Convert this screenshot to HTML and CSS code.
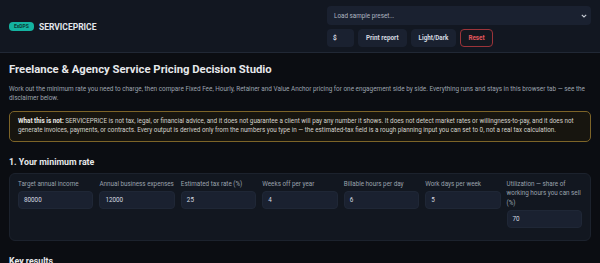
FILE: index.html
```html
<!DOCTYPE html>
<html lang="en">
<head>
    <meta charset="UTF-8">
    <meta name="viewport" content="width=device-width, initial-scale=1.0">
    <title>SERVICEPRICE</title>
    <link rel="stylesheet" href="styles.css">
</head>
<body>

    <!-- Top bar -->
    <header class="topbar">
        <div class="brand">
            <span class="badge">ExDPS</span>
            <span class="brand-name">SERVICEPRICE</span>
        </div>
        <div class="controls">
            <div class="preset">
                <span>Load sample preset...</span>
                <svg class="chevron" width="6" height="4" viewBox="0 0 6 4"><path d="M0.8 0.8 L3 3 L5.2 0.8" fill="none" stroke="#c7ccd4" stroke-width="1.1"/></svg>
            </div>
            <div class="control-row">
                <div class="currency">$</div>
                <button class="btn">Print report</button>
                <button class="btn">Light/Dark</button>
                <button class="btn btn-reset">Reset</button>
            </div>
        </div>
    </header>

    <main class="page">
        <h1>Freelance &amp; Agency Service Pricing Decision Studio</h1>
        <p class="intro">Work out the minimum rate you need to charge, then compare Fixed Fee, Hourly, Retainer and Value Anchor pricing for one engagement side by side. Everything runs and stays in this browser tab — see the disclaimer below.</p>

        <div class="notice">
            <strong>What this is not:</strong> SERVICEPRICE is not tax, legal, or financial advice, and it does not guarantee a client will pay any number it shows. It does not detect market rates or willingness-to-pay, and it does not generate invoices, payments, or contracts. Every output is derived only from the numbers you type in — the estimated-tax field is a rough planning input you can set to 0, not a real tax calculation.
        </div>

        <h2>1. Your minimum rate</h2>
        <div class="card">
            <label class="field">Target annual income<span class="input">80000</span></label>
            <label class="field">Annual business expenses<span class="input">12000</span></label>
            <label class="field">Estimated tax rate (%)<span class="input">25</span></label>
            <label class="field">Weeks off per year<span class="input">4</span></label>
            <label class="field">Billable hours per day<span class="input">6</span></label>
            <label class="field">Work days per week<span class="input">5</span></label>
            <label class="field"><span>Utilization — share of working hours you can sell<br>(%)</span><span class="input">70</span></label>
        </div>

        <h2>Key results</h2>
    </main>

</body>
</html>
```

FILE: styles.css
```css
/* General Page Styles */
body {
    font-family: Roboto, 'Liberation Sans', sans-serif;
    background: #0b0d12;
    color: #e4e7eb;
    margin: 0;
}

/* Top bar */
.topbar {
    display: flex;
    justify-content: space-between;
    align-items: center;
    background: #121721;
    border-bottom: 1px solid #212835;
    padding: 6px 9px 5px;
}

.brand {
    display: flex;
    align-items: center;
    gap: 5px;
}

.badge {
    background: #14b3a1;
    color: #0b3b35;
    font-size: 5px;
    font-weight: 700;
    padding: 2px 5px;
    border-radius: 4px;
    line-height: 5px;
}

.brand-name {
    font-size: 8.5px;
    font-weight: 700;
    color: #e3e6eb;
}

.controls {
    width: 264px;
    display: flex;
    flex-direction: column;
    gap: 4px;
}

.preset {
    height: 19px;
    background: #1a2130;
    border-radius: 4px;
    display: flex;
    align-items: center;
    justify-content: space-between;
    padding: 0 4px 0 7px;
    font-size: 6.3px;
    color: #aeb5c0;
}

.control-row {
    display: flex;
    gap: 4px;
}

.currency {
    width: 27px;
    height: 18px;
    box-sizing: border-box;
    background: #1a2130;
    border-radius: 4px;
    padding-left: 6px;
    font-size: 6.5px;
    font-weight: 700;
    line-height: 18px;
    color: #d6dae0;
}

.btn {
    height: 18px;
    background: #1a2130;
    border: 1px solid #1a2130;
    border-radius: 4px;
    color: #d6dae0;
    font-family: inherit;
    font-size: 6.3px;
    font-weight: 700;
    padding: 0 7px;
}

.btn-reset {
    background: #141820;
    border-color: #9c343a;
    color: #e5575d;
}

/* Main content */
.page {
    padding: 9px 9px 0;
}

h1 {
    font-size: 11.3px;
    line-height: 16px;
    margin: 0 0 7px;
    color: #e6e8eb;
}

.intro {
    font-size: 6.4px;
    line-height: 9.3px;
    color: #9ba3ae;
    margin: 0 0 7px;
}

.notice {
    border: 1px solid #7d6428;
    background: #17150f;
    border-radius: 5px;
    padding: 5px 8px 6px;
    font-size: 6.3px;
    line-height: 9.3px;
    color: #d4d2cc;
}

.notice strong {
    color: #eceae6;
}

h2 {
    font-size: 8.8px;
    line-height: 12px;
    margin: 14px 0 5px;
    color: #e6e8eb;
}

.card {
    display: grid;
    grid-template-columns: repeat(7, 1fr);
    gap: 6px;
    align-items: start;
    background: #121720;
    border: 1px solid #1c222d;
    border-radius: 6px;
    padding: 6px 8px 12px;
}

.field {
    display: flex;
    flex-direction: column;
    gap: 2px;
    font-size: 6.3px;
    line-height: 9.3px;
    color: #9aa2ad;
}

.input {
    height: 18px;
    box-sizing: border-box;
    background: #1a2130;
    border: 1px solid #1f2736;
    border-radius: 4px;
    padding-left: 5px;
    line-height: 16px;
    color: #d6dae0;
    font-size: 6.3px;
}
```
